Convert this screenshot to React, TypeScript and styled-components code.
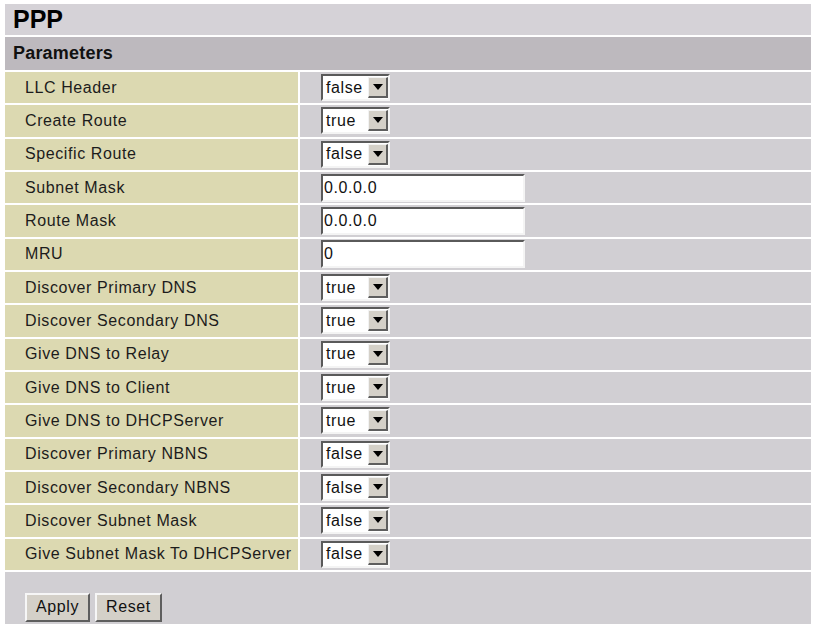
import React from "react";
import styled, { createGlobalStyle } from "styled-components";

type Field =
  | { label: string; kind: "select"; value: "true" | "false" }
  | { label: string; kind: "text"; value: string };

const fields: Field[] = [
  { label: "LLC Header", kind: "select", value: "false" },
  { label: "Create Route", kind: "select", value: "true" },
  { label: "Specific Route", kind: "select", value: "false" },
  { label: "Subnet Mask", kind: "text", value: "0.0.0.0" },
  { label: "Route Mask", kind: "text", value: "0.0.0.0" },
  { label: "MRU", kind: "text", value: "0" },
  { label: "Discover Primary DNS", kind: "select", value: "true" },
  { label: "Discover Secondary DNS", kind: "select", value: "true" },
  { label: "Give DNS to Relay", kind: "select", value: "true" },
  { label: "Give DNS to Client", kind: "select", value: "true" },
  { label: "Give DNS to DHCPServer", kind: "select", value: "true" },
  { label: "Discover Primary NBNS", kind: "select", value: "false" },
  { label: "Discover Secondary NBNS", kind: "select", value: "false" },
  { label: "Discover Subnet Mask", kind: "select", value: "false" },
  { label: "Give Subnet Mask To DHCPServer", kind: "select", value: "false" },
];

const GlobalStyle = createGlobalStyle`
  body {
    margin: 0;
    background: #ffffff;
    font-family: "Liberation Sans", Arial, sans-serif;
    color: #1a1a1a;
  }
`;

const Page = styled.div`
  padding: 4px 4px 0 5px;
`;

const Panel = styled.div`
  width: 806px;
  display: flex;
  flex-direction: column;
  gap: 2px;
`;

const TitleBar = styled.div`
  height: 31px;
  background: #d5d2d7;
  display: flex;
  align-items: center;
  padding-left: 8px;
  font-size: 25px;
  font-weight: bold;
  color: #000;
`;

const SectionBar = styled.div`
  height: 33px;
  background: #bdb9be;
  display: flex;
  align-items: center;
  padding-left: 8px;
  font-size: 18px;
  font-weight: bold;
  letter-spacing: 0.2px;
  color: #111;
`;

const Row = styled.div`
  height: 31.33px;
  display: grid;
  grid-template-columns: 293px 1fr;
  column-gap: 2px;
`;

const LabelCell = styled.div`
  background: #dcd9b1;
  display: flex;
  align-items: center;
  padding-left: 20px;
  font-size: 16px;
  letter-spacing: 0.6px;
  white-space: nowrap;
  color: #1c1c1c;
`;

const ValueCell = styled.div`
  background: #d1cfd3;
  display: flex;
  align-items: center;
  padding-left: 21px;
`;

const SelectBox = styled.div`
  box-sizing: border-box;
  width: 69px;
  height: 27px;
  background: #fff;
  border-top: 2px solid #5a5a5a;
  border-left: 2px solid #5a5a5a;
  border-right: 2px solid #f4f4f4;
  border-bottom: 2px solid #f4f4f4;
  display: flex;
  align-items: stretch;
  font-size: 16px;
  letter-spacing: 0.6px;
`;

const SelectValue = styled.span`
  flex: 1;
  display: flex;
  align-items: center;
  padding-left: 3px;
  color: #111;
`;

const ArrowButton = styled.span`
  box-sizing: border-box;
  width: 20px;
  margin: 1px 0;
  background: #d4d0c8;
  border-top: 1px solid #f2f2f2;
  border-left: 1px solid #f2f2f2;
  border-right: 2px solid #5e5e5e;
  border-bottom: 2px solid #5e5e5e;
  display: flex;
  align-items: center;
  justify-content: center;

  &::after {
    content: "";
    border-left: 5px solid transparent;
    border-right: 5px solid transparent;
    border-top: 6px solid #000;
  }
`;

const TextInput = styled.input`
  box-sizing: border-box;
  width: 204px;
  height: 28px;
  margin: 0;
  padding: 0 1px;
  background: #fff;
  border-top: 2px solid #5a5a5a;
  border-left: 2px solid #5a5a5a;
  border-right: 2px solid #f4f4f4;
  border-bottom: 2px solid #f4f4f4;
  font-family: "Liberation Sans", Arial, sans-serif;
  font-size: 16px;
  letter-spacing: 0.6px;
  color: #111;
  outline: none;
`;

const Footer = styled.div`
  height: 52px;
  background: #d1cfd3;
  display: flex;
  align-items: flex-start;
  gap: 5px;
  padding: 21px 0 0 20px;
  box-sizing: border-box;
`;

const Button = styled.button`
  height: 29px;
  padding: 0 9px;
  background: #d4d0c8;
  border-top: 2px solid #f6f6f6;
  border-left: 2px solid #f6f6f6;
  border-right: 2px solid #5e5e5e;
  border-bottom: 2px solid #5e5e5e;
  font-family: "Liberation Sans", Arial, sans-serif;
  font-size: 16px;
  letter-spacing: 0.6px;
  color: #111;
`;

const App: React.FC = () => {
  return (
    <>
      <GlobalStyle />
      <Page>
        <Panel>
          <TitleBar>PPP</TitleBar>
          <SectionBar>Parameters</SectionBar>
          {fields.map((f) => (
            <Row key={f.label}>
              <LabelCell>{f.label}</LabelCell>
              <ValueCell>
                {f.kind === "select" ? (
                  <SelectBox>
                    <SelectValue>{f.value}</SelectValue>
                    <ArrowButton />
                  </SelectBox>
                ) : (
                  <TextInput defaultValue={f.value} />
                )}
              </ValueCell>
            </Row>
          ))}
          <Footer>
            <Button>Apply</Button>
            <Button>Reset</Button>
          </Footer>
        </Panel>
      </Page>
    </>
  );
};

export default App;
